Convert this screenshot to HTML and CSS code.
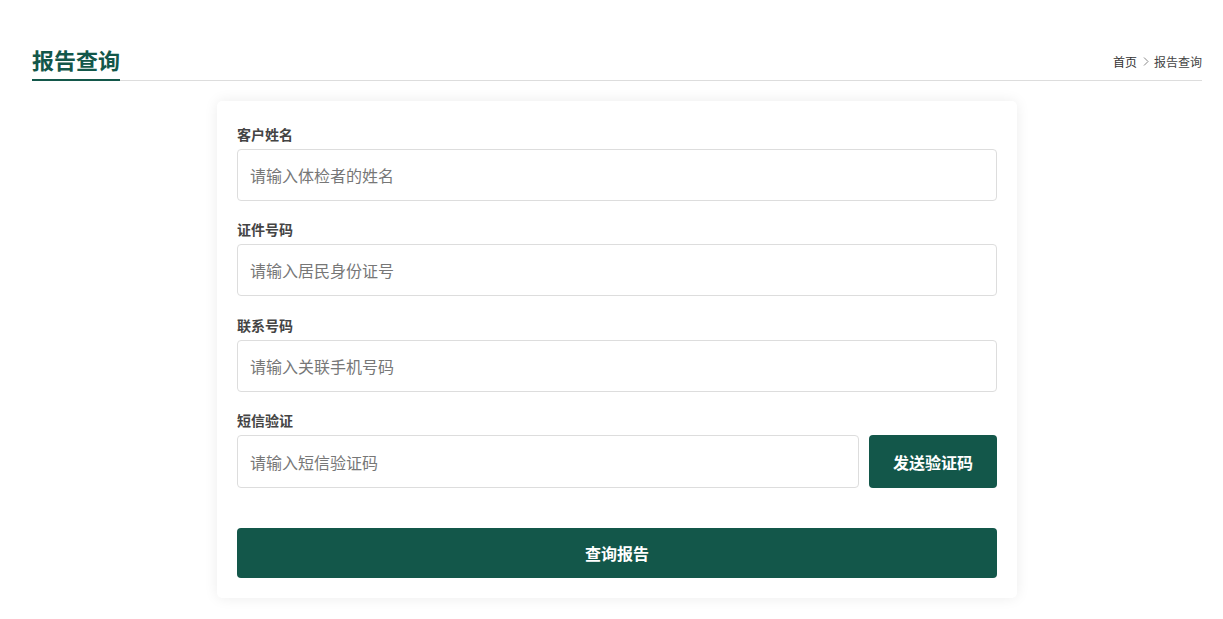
FILE: index.html
```html
<!DOCTYPE html>
<html lang="zh-CN">
<head>
    <meta charset="UTF-8">
    <meta name="viewport" content="width=device-width, initial-scale=1.0">
    <title>报告查询</title>
    <link rel="stylesheet" href="styles.css">
</head>
<body>
    <div class="container">
        <div class="page-head">
            <h2 class="page-title">报告查询</h2>
            <div class="breadcrumb">
                <a href="#">首页</a>
                <svg class="sep" width="6" height="9" viewBox="0 0 6 9"><path d="M1 0.5 L5 4.5 L1 8.5" fill="none" stroke="#888" stroke-width="1"/></svg>
                <span>报告查询</span>
            </div>
        </div>

        <div class="query-card">
            <div class="form-group">
                <label>客户姓名</label>
                <input type="text" placeholder="请输入体检者的姓名">
            </div>
            <div class="form-group">
                <label>证件号码</label>
                <input type="text" placeholder="请输入居民身份证号">
            </div>
            <div class="form-group">
                <label>联系号码</label>
                <input type="text" placeholder="请输入关联手机号码">
            </div>
            <div class="form-group">
                <label>短信验证</label>
                <div class="code-row">
                    <input type="text" placeholder="请输入短信验证码">
                    <button class="btn btn-code">发送验证码</button>
                </div>
            </div>
            <button class="btn btn-submit">查询报告</button>
        </div>
    </div>
</body>
</html>
```

FILE: styles.css
```css
body {
    margin: 0;
    background: #fff;
    font-family: "Noto Sans CJK SC", "Noto Sans", sans-serif;
    color: #333;
}
.container {
    padding: 40px 21px 24px 32px;
}
.page-head {
    display: flex;
    justify-content: space-between;
    align-items: flex-end;
    border-bottom: 1px solid #ddd;
}
.page-title {
    margin: 0 0 -1px;
    font-size: 22px;
    line-height: 38px;
    font-weight: bold;
    color: #13574a;
    border-bottom: 2px solid #13574a;
    padding-bottom: 1px;
}
.breadcrumb {
    display: flex;
    align-items: center;
    font-size: 12px;
    color: #444;
    padding-bottom: 10px;
}
.breadcrumb a {
    color: #333;
    text-decoration: none;
}
.breadcrumb .sep {
    margin: 0 5px 0 6px;
}
.query-card {
    width: 760px;
    margin: 20px auto 0;
    padding: 23px 20px 20px;
    background: #fff;
    border-radius: 5px;
    box-shadow: 0 0 14px rgba(0,0,0,0.08);
}
.form-group {
    margin-bottom: 18.4px;
}
.form-group label {
    display: block;
    font-size: 14px;
    line-height: 20px;
    font-weight: bold;
    color: #444;
    margin-bottom: 5px;
}
input {
    display: block;
    width: 100%;
    box-sizing: border-box;
    height: 52px;
    border: 1px solid #ddd;
    border-radius: 4px;
    padding: 0 12px;
    font-family: inherit;
    font-size: 16px;
    color: #333;
    outline: none;
}
input::placeholder {
    color: #777;
}
.code-row {
    display: flex;
    gap: 10px;
}
.code-row input {
    flex: 1;
    height: 53px;
}
.btn {
    background: #13574a;
    color: #fff;
    border: none;
    border-radius: 4px;
    font-family: inherit;
    font-weight: bold;
    font-size: 16px;
    cursor: pointer;
}
.btn-code {
    width: 128px;
    height: 53px;
    flex: none;
}
.btn-submit {
    display: block;
    width: 100%;
    height: 50px;
    margin-top: 40px;
}
```
